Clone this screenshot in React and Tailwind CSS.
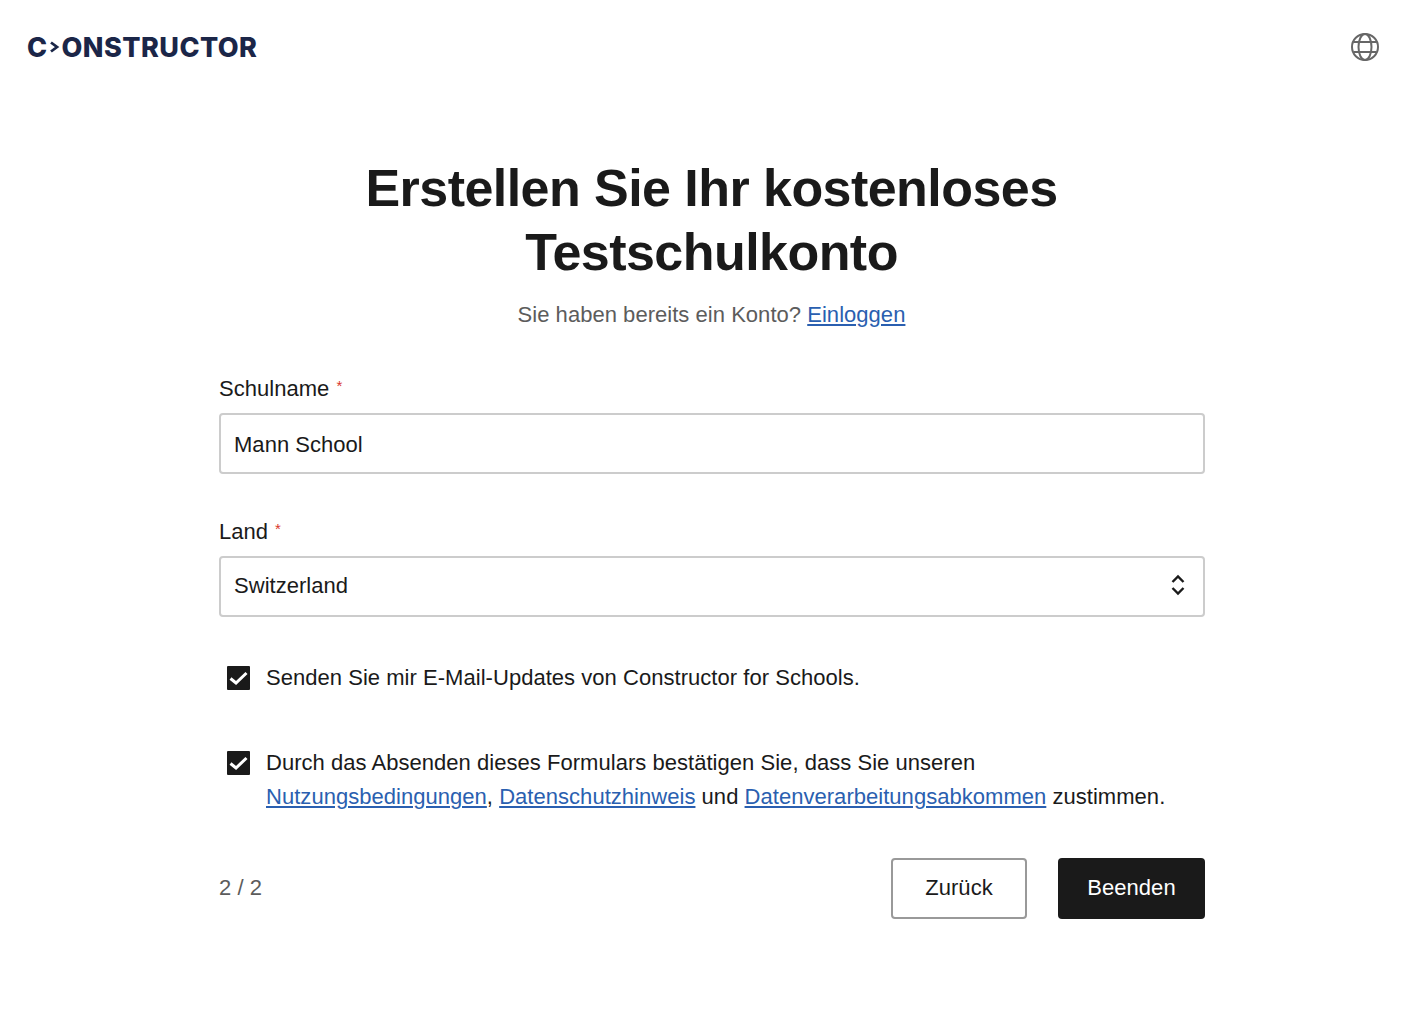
const Check = () => (
  <div className="w-[23px] h-[24px] bg-[#1a1a1a] rounded-[1px] flex items-center justify-center shrink-0 ml-2 mr-[16px] mt-[5px]">
    <svg width="19" height="15" viewBox="0 0 19 15" fill="none">
      <path d="M1.5 7.5L7 12L17.5 2" stroke="white" strokeWidth="3" />
    </svg>
  </div>
);

const Required = () => <span className="text-[#d9362b] text-[15px] ml-[7px] align-[5px]">*</span>;

const A = ({ children }) => (
  <a href="#" className="text-[#2a5fb0] underline underline-offset-[2px]">
    {children}
  </a>
);

const App = () => {
  return (
    <div className="bg-white min-h-[1030px] text-[#1a1a1a] font-['Liberation_Sans',Arial,sans-serif] text-[22px] leading-[34px] tracking-[0.035px]">
      {/* header */}
      <header className="flex justify-between items-center h-[94px] pl-[27px] pr-[40px]">
        <div className="flex items-center font-['Inter',sans-serif] font-extrabold text-[27px] leading-none tracking-[0.45px] text-[#1b2648]">
          <span>C</span>
          <svg width="11" height="12" viewBox="0 0 11 12" fill="none" className="ml-[1px] mr-[2px]">
            <path d="M2 1.5L8 6L2 10.5" stroke="#1b2648" strokeWidth="2.8" />
          </svg>
          <span>ONSTRUCTOR</span>
        </div>
        <svg width="30" height="30" viewBox="0 0 30 30" fill="none" stroke="#666666" strokeWidth="2">
          <circle cx="15" cy="15" r="13" />
          <ellipse cx="15" cy="15" rx="6.5" ry="13" />
          <path d="M3.5 10H26.5M3.5 20H26.5" />
        </svg>
      </header>

      <main className="w-[986px] ml-[219px] pt-[62px]">
        <h1 className="text-center text-[52px] leading-[64px] font-bold text-[#1a1a1a] tracking-[-0.55px] pr-[1px]">
          Erstellen Sie Ihr kostenloses
          <br />
          Testschulkonto
        </h1>
        <p className="text-center text-[#5c5c5c] mt-[14px] pr-[1px]">
          Sie haben bereits ein Konto? <A>Einloggen</A>
        </p>

        <label className="block mt-[37px] mb-[7px]">
          Schulname
          <Required />
        </label>
        <div className="h-[61px] border-2 border-[#cccccc] rounded-[4px] flex items-center px-[13px] pt-[2px]">
          Mann School
        </div>

        <label className="block mt-[38px] mb-[7px]">
          Land
          <Required />
        </label>
        <div className="h-[61px] border-2 border-[#cccccc] rounded-[4px] flex items-center justify-between pl-[13px] pr-[17px]">
          <span className="-mt-[1px]">Switzerland</span>
          <svg width="16" height="22" viewBox="0 0 16 22" fill="none" className="-mt-[3px]">
            <path d="M2.5 8L8 2.5L13.5 8M2.5 14L8 19.5L13.5 14" stroke="#1a1a1a" strokeWidth="2.4" />
          </svg>
        </div>

        <div className="flex mt-[44px]">
          <Check />
          <span>Senden Sie mir E-Mail-Updates von Constructor for Schools.</span>
        </div>

        <div className="flex mt-[51px]">
          <Check />
          <span>
            Durch das Absenden dieses Formulars bestätigen Sie, dass Sie unseren <br />
            <A>Nutzungsbedingungen</A>, <A>Datenschutzhinweis</A> und <A>Datenverarbeitungsabkommen</A> zustimmen.
          </span>
        </div>

        <div className="flex items-center justify-between mt-[44px]">
          <span className="text-[#5c5c5c] -mt-[2px]">2 / 2</span>
          <div className="flex gap-[31px]">
            <button className="w-[136px] h-[61px] border-2 border-[#999999] rounded-[4px] pb-[1px]">Zurück</button>
            <button className="w-[147px] h-[61px] bg-[#1a1a1a] text-white rounded-[4px] pb-[1px]">Beenden</button>
          </div>
        </div>
      </main>
    </div>
  );
};

export default App;
